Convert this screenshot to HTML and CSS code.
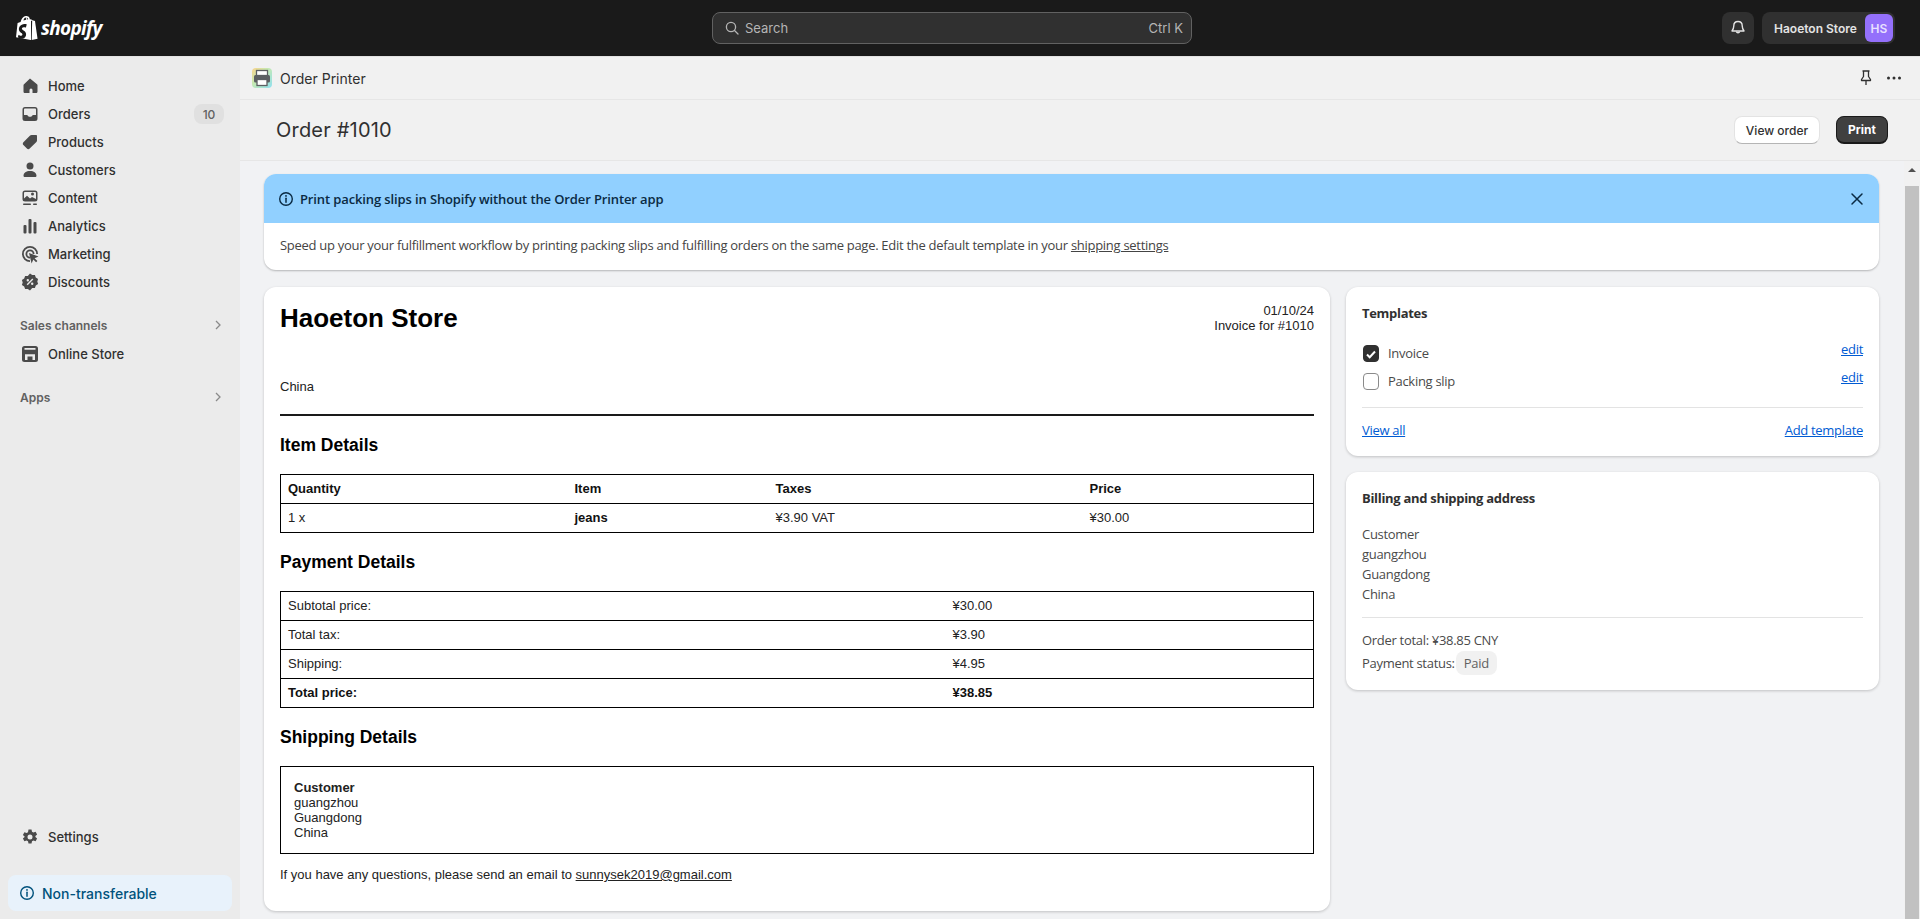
FILE: index.html
```html
<!DOCTYPE html>
<html lang="en">
<head>
<meta charset="utf-8">
<title>Order #1010</title>
<link rel="stylesheet" href="styles.css">
</head>
<body>
<header class="topbar">
  <div class="logo">
    <svg class="logo-bag" viewBox="0 0 22 25" width="22" height="25"><path fill="#fff" d="M18.6 4.9c0-.1-.1-.2-.2-.2l-1.900-.1-1.400-1.400c-.1-.1-.4-.1-.5 0l-.7.200C13.500 1.400 12.700.3 11.300.3h-.1C10.800-.200 10.300 0 9.900 0 6.700 0 5.100 4 4.600 6.100l-2.300.7c-.7.2-.7.2-.8.900L0 21.300 14.700 24l.3-.1V4.800l.6 0 3 .1zM12.200 3.200l-1.300.4V3.300c0-.8-.1-1.400-.3-1.900.8.100 1.300 1 1.600 1.800zM9.700 1.500c.2.500.4 1.200.4 2.100v.2l-2.700.8c.5-2 1.500-2.900 2.300-3.100z"/><path fill="#fff" d="M15.700 24l5.900-1.300S19 5.200 19 5.100c0-.1-.1-.2-.2-.2l-1.700-.1-.9-.9z"/><path fill="#1a1a1a" d="M10.800 8.300l-.9 3.300s-1-.5-2.200-.4c-1.700.1-1.800 1.200-1.800 1.500.1 1.500 4 1.800 4.200 5.300.2 2.700-1.400 4.600-3.800 4.700-2.800.2-4.400-1.500-4.400-1.500l.6-2.500s1.600 1.200 2.800 1.100c.8 0 1.100-.7 1.100-1.200-.1-2-3.300-1.800-3.500-5-.2-2.700 1.600-5.400 5.500-5.700 1.500-.1 2.300.3 2.300.3z"/></svg>
    <span class="logo-word">shopify</span>
  </div>
  <div class="search">
    <svg class="search-icon" viewBox="0 0 14 14" width="14" height="14"><circle cx="6" cy="6" r="4.600" fill="none" stroke="#b5b5b5" stroke-width="1.300"/><path d="M9.500 9.500L13 13" stroke="#b5b5b5" stroke-width="1.300" stroke-linecap="round"/></svg>
    <span class="search-label">Search</span>
    <span class="search-key">Ctrl K</span>
  </div>
  <div class="top-actions">
    <div class="bell">
      <svg viewBox="0 0 16 16" width="16" height="16"><path fill="none" stroke="#e3e3e3" stroke-width="1.400" stroke-linejoin="round" d="M8 1.500c-2.700 0-4.200 2-4.200 4.300 0 2.700-.5 3.500-1.800 5.200h12c-1.300-1.700-1.800-2.500-1.800-5.200C12.200 3.500 10.700 1.500 8 1.500z"/><path fill="none" stroke="#e3e3e3" stroke-width="1.400" d="M6.300 11.500a1.800 1.800 0 0 0 3.400 0"/></svg>
    </div>
    <div class="store-btn">
      <span class="store-name">Haoeton Store</span>
      <span class="avatar">HS</span>
    </div>
  </div>
</header>

<div class="shell">
  <nav class="sidebar">
    <ul class="nav-list">
      <li class="nav-item"><svg class="nav-icon" viewBox="0 0 20 20"><path d="M10 2.500l7 5.700c.4.300.5.600.5 1.100v6.200c0 1-.8 1.500-1.500 1.500h-3.500v-3a1.500 1.500 0 0 0-3 0v3H5c-.8 0-1.500-.5-1.500-1.500V9.300c0-.5.100-.8.500-1.100z"/></svg><span>Home</span></li>
      <li class="nav-item"><svg class="nav-icon" viewBox="0 0 20 20"><path fill-rule="evenodd" d="M5 3h10a2.500 2.500 0 0 1 2.500 2.500v9A2.500 2.500 0 0 1 15 17H5a2.500 2.500 0 0 1-2.500-2.500v-9A2.500 2.500 0 0 1 5 3zm-1 8v-5.500C4 5 4.500 4.500 5 4.500h10c.5 0 1 .5 1 1V11h-2.700c-.6 0-1 .3-1.200.8-.3.600-1 1-2.100 1s-1.800-.4-2.100-1c-.2-.5-.6-.8-1.200-.8z"/></svg><span>Orders</span><span class="count">10</span></li>
      <li class="nav-item"><svg class="nav-icon" viewBox="0 0 20 20"><path d="M11.500 3H16c.6 0 1 .4 1 1v4.500c0 .5-.2 1-.6 1.400l-6.700 6.700c-.8.800-2 .8-2.800 0l-3.500-3.500c-.8-.8-.8-2 0-2.800l6.700-6.700c.4-.4.900-.6 1.400-.6z"/></svg><span>Products</span></li>
      <li class="nav-item"><svg class="nav-icon" viewBox="0 0 20 20"><circle cx="10" cy="6" r="3.500"/><path d="M10 11c3.800 0 6.500 2 6.500 4.700 0 .7-.6 1.300-1.300 1.300H4.800c-.7 0-1.300-.6-1.300-1.300C3.500 13 6.200 11 10 11z"/></svg><span>Customers</span></li>
      <li class="nav-item"><svg class="nav-icon" viewBox="0 0 20 20"><path fill-rule="evenodd" d="M5 2.500h10A2.500 2.500 0 0 1 17.500 5v6a2.500 2.500 0 0 1-2.500 2.500H5A2.500 2.500 0 0 1 2.500 11V5A2.500 2.500 0 0 1 5 2.500zM4 10.500l3-2.800 3 2.800 2-1.500 4 2V5c0-.5-.5-1-1-1H5c-.5 0-1 .5-1 1zM12.500 7.500a1.500 1.500 0 1 0 0-3 1.500 1.500 0 0 0 0 3z"/><rect x="3" y="15.500" width="8" height="1.500" rx=".7"/><rect x="13" y="15.500" width="4" height="1.500" rx=".7"/></svg><span>Content</span></li>
      <li class="nav-item"><svg class="nav-icon" viewBox="0 0 20 20"><rect x="3.500" y="9" width="3" height="8.500" rx="1"/><rect x="8.500" y="3" width="3" height="14.500" rx="1"/><rect x="13.500" y="6" width="3" height="11.500" rx="1"/></svg><span>Analytics</span></li>
      <li class="nav-item"><svg class="nav-icon" viewBox="0 0 20 20"><path fill-rule="evenodd" d="M10 2a8 8 0 0 1 8 8h-1.800A6.200 6.200 0 1 0 10 16.200V18a8 8 0 0 1 0-16zm0 3.500A4.500 4.500 0 0 1 14.500 10h-1.800A2.700 2.700 0 1 0 10 12.700v1.800a4.500 4.500 0 0 1 0-9z"/><path d="M9 9l9.500 3.500-3.900 1.700 2.800 2.800-1.300 1.300-2.800-2.800-1.700 3.900z"/></svg><span>Marketing</span></li>
      <li class="nav-item"><svg class="nav-icon" viewBox="0 0 20 20"><path fill-rule="evenodd" d="M10 1.500l2.200 1.600 2.700-.2.900 2.500 2.300 1.500-.8 2.600.8 2.600-2.300 1.500-.9 2.500-2.700-.2L10 18.500l-2.200-1.600-2.700.2-.9-2.500-2.300-1.500.8-2.600-.8-2.600 2.300-1.500.9-2.500 2.700.2zM7.800 7a1.200 1.200 0 1 0 0 2.400 1.200 1.200 0 0 0 0-2.400zm4.400 3.600a1.200 1.200 0 1 0 0 2.400 1.200 1.200 0 0 0 0-2.400zM12.300 6.600L6.700 12.300l1 1 5.600-5.700z"/></svg><span>Discounts</span></li>
    </ul>
    <div class="nav-section nav-section-sales"><span>Sales channels</span><svg class="chev" viewBox="0 0 8 12" width="8" height="12"><path d="M2 2l4 4-4 4" fill="none" stroke="#8a8a8a" stroke-width="1.300"/></svg></div>
    <ul class="nav-list">
      <li class="nav-item"><svg class="nav-icon" viewBox="0 0 20 20"><path fill-rule="evenodd" d="M4.500 2h11A2.500 2.500 0 0 1 18 4.500v11a2.500 2.500 0 0 1-2.500 2.500h-11A2.500 2.500 0 0 1 2 15.500v-11A2.500 2.500 0 0 1 4.500 2zM4.500 4h11v1.700h-11zM5 10.200h10V16h-2.500v-3.500h-5V16H5z"/></svg><span>Online Store</span></li>
    </ul>
    <div class="nav-section nav-section-apps"><span>Apps</span><svg class="chev" viewBox="0 0 8 12" width="8" height="12"><path d="M2 2l4 4-4 4" fill="none" stroke="#8a8a8a" stroke-width="1.300"/></svg></div>
    <ul class="nav-list nav-bottom">
      <li class="nav-item"><svg class="nav-icon" viewBox="0 0 20 20"><path fill-rule="evenodd" d="M8.500 2.500h3l.5 2.200 1.400.8 2.200-.7 1.500 2.600-1.700 1.500v1.200l1.700 1.500-1.500 2.600-2.200-.7-1.400.8-.5 2.200h-3l-.5-2.200-1.400-.8-2.200.7-1.500-2.600 1.700-1.500V9.400L2.900 7.900l1.500-2.600 2.200.7 1.400-.8zM10 7.500a2.500 2.500 0 1 0 0 5 2.500 2.500 0 0 0 0-5z"/></svg><span>Settings</span></li>
    </ul>
    <div class="plan-box">
      <svg viewBox="0 0 16 16" width="16" height="16"><circle cx="8" cy="8" r="6.300" fill="none" stroke="#00527c" stroke-width="1.400"/><path d="M8 7.200v4" stroke="#00527c" stroke-width="1.500" stroke-linecap="round"/><circle cx="8" cy="4.900" r=".9" fill="#00527c"/></svg>
      <span>Non-transferable</span>
    </div>
  </nav>

  <main class="content">
    <div class="app-header">
      <div class="app-icon">
        <svg viewBox="0 0 20 20" width="20" height="20"><rect x="4.500" y="2.500" width="11" height="5" fill="#fff" stroke="#5c5f62" stroke-width="1.300"/><rect x="2" y="7" width="16" height="7.500" rx="1.500" fill="#5c5f62"/><rect x="5" y="11.500" width="10" height="6" fill="#fff" stroke="#5c5f62" stroke-width="1.300"/></svg>
      </div>
      <span class="app-name">Order Printer</span>
      <div class="app-tools">
        <svg viewBox="0 0 16 18" width="16" height="18"><path fill="none" stroke="#303030" stroke-width="1.300" stroke-linejoin="round" d="M4.500 2h7M5.500 2v5.500L3.500 10.500v1h9v-1L10.500 7.500V2M8 11.500V16"/></svg>
        <svg viewBox="0 0 16 4" width="16" height="4"><circle cx="2.500" cy="2" r="1.500" fill="#303030"/><circle cx="8" cy="2" r="1.500" fill="#303030"/><circle cx="13.500" cy="2" r="1.500" fill="#303030"/></svg>
      </div>
    </div>
    <div class="title-bar">
      <h1 class="page-title">Order #1010</h1>
      <div class="title-actions">
        <button class="btn btn-light">View order</button>
        <button class="btn btn-dark">Print</button>
      </div>
    </div>
    <div class="pane">
      <section class="banner">
        <div class="banner-head">
          <svg viewBox="0 0 16 16" width="16" height="16"><circle cx="8" cy="8" r="6.300" fill="none" stroke="#0a2a43" stroke-width="1.400"/><path d="M8 7.200v4" stroke="#0a2a43" stroke-width="1.500" stroke-linecap="round"/><circle cx="8" cy="4.900" r=".9" fill="#0a2a43"/></svg>
          <strong class="banner-title">Print packing slips in Shopify without the Order Printer app</strong>
          <svg class="banner-close" viewBox="0 0 14 14" width="14" height="14"><path d="M2 2l10 10M12 2L2 12" stroke="#0a2a43" stroke-width="1.500" stroke-linecap="round"/></svg>
        </div>
        <p class="banner-body">Speed up your your fulfillment workflow by printing packing slips and fulfilling orders on the same page. Edit the default template in your <u>shipping settings</u></p>
      </section>

      <div class="columns">
        <article class="card doc">
          <div class="doc-head">
            <h2 class="doc-store">Haoeton Store</h2>
            <div class="doc-meta">01/10/24<br>Invoice for #1010</div>
          </div>
          <p class="doc-country">China</p>
          <hr class="doc-rule">
          <h3 class="doc-h">Item Details</h3>
          <table class="doc-table items">
            <tr><th>Quantity</th><th>Item</th><th>Taxes</th><th>Price</th></tr>
            <tr><td>1 x</td><td><b>jeans</b></td><td>¥3.90 VAT</td><td>¥30.00</td></tr>
          </table>
          <h3 class="doc-h">Payment Details</h3>
          <table class="doc-table pay">
            <tr><td>Subtotal price:</td><td>¥30.00</td></tr>
            <tr><td>Total tax:</td><td>¥3.90</td></tr>
            <tr><td>Shipping:</td><td>¥4.95</td></tr>
            <tr><th>Total price:</th><th>¥38.85</th></tr>
          </table>
          <h3 class="doc-h">Shipping Details</h3>
          <div class="ship-box"><b>Customer</b><br>guangzhou<br>Guangdong<br>China</div>
          <p class="doc-foot">If you have any questions, please send an email to <u>sunnysek2019@gmail.com</u></p>
        </article>

        <aside class="side">
          <section class="card side-card tpl">
            <h4 class="side-title">Templates</h4>
            <div class="tpl-row">
              <span class="check check-on"><svg viewBox="0 0 16 16" width="16" height="16"><path d="M4 8.500l2.700 2.700L12 5.500" fill="none" stroke="#fff" stroke-width="2"/></svg></span>
              <span class="tpl-name">Invoice</span><a class="link tpl-edit">edit</a>
            </div>
            <div class="tpl-row">
              <span class="check"></span>
              <span class="tpl-name">Packing slip</span><a class="link tpl-edit">edit</a>
            </div>
            <hr class="side-rule">
            <div class="tpl-foot"><a class="link">View all</a><a class="link">Add template</a></div>
          </section>
          <section class="card side-card addr">
            <h4 class="side-title">Billing and shipping address</h4>
            <p class="addr-lines">Customer<br>guangzhou<br>Guangdong<br>China</p>
            <hr class="side-rule">
            <p class="total-line">Order total: ¥38.85 CNY</p>
            <p class="status-line">Payment status: <span class="pill">Paid</span></p>
          </section>
        </aside>
      </div>
      <div class="scrollbar" aria-hidden="true"><span class="sb-arrow"></span><span class="sb-thumb"></span></div>
    </div>
  </main>
</div>
</body>
</html>
```
FILE: styles.css
```css
* { box-sizing: border-box; }
html, body { margin: 0; height: 100%; overflow: hidden; }
body { display: flex; flex-direction: column; height: 919px; font-family: Inter, "Liberation Sans", sans-serif; color: #303030; background: #f1f2f4; }
ul { list-style: none; margin: 0; padding: 0; }
h1, h2, h3, h4, p { margin: 0; }

.topbar { height: 56px; flex: none; background: #1a1a1a; display: grid; grid-template-columns: 712px 480px 1fr; align-items: center; }
.logo { display: flex; align-items: center; gap: 3px; padding-left: 16px; }
.logo-bag { display: block; }
.logo-word { font: italic 700 19px "Open Sans", sans-serif; color: #fff; letter-spacing: -0.7px; line-height: 25px; }
.search { height: 32px; background: #303030; border: 1px solid #616161; border-radius: 8px; display: flex; align-items: center; padding: 0 8px 0 12px; font-size: 13px; color: #b5b5b5; }
.search-icon { margin-right: 6px; }
.search-key { margin-left: auto; }
.top-actions { display: flex; justify-content: flex-end; align-items: center; gap: 8px; padding-right: 25px; }
.bell { width: 32px; height: 32px; border-radius: 8px; background: #303030; display: flex; align-items: center; justify-content: center; }
.store-btn { height: 32px; width: 133px; background: #303030; border-radius: 8px; display: flex; align-items: center; justify-content: space-between; padding: 0 2px 0 12px; }
.store-name { font-size: 12px; font-weight: 600; color: #e3e3e3; }
.avatar { width: 28px; height: 28px; border-radius: 6px; background: #9470fb; color: #e8e0ff; font-size: 12px; font-weight: 600; display: flex; align-items: center; justify-content: center; }

.shell { flex: 1; display: flex; min-height: 0; border-top: 1px solid #e3e3e3; }
.sidebar { width: 240px; flex: none; background: #ebebeb; padding: 15px 8px 8px; display: flex; flex-direction: column; }
.nav-item { height: 28px; display: flex; align-items: center; gap: 8px; padding: 0 8px 0 12px; font-size: 13px; font-weight: 500; color: #303030; }
.nav-icon { width: 20px; height: 20px; fill: #4a4a4a; flex: none; }
.count { margin-left: auto; width: 30px; height: 20px; border-radius: 8px; background: #e0e0e0; color: #616161; font-size: 12px; display: flex; align-items: center; justify-content: center; }
.nav-section { height: 28px; display: flex; align-items: center; justify-content: space-between; padding: 0 10px 0 12px; font-size: 12px; font-weight: 600; color: #616161; }
.nav-section-sales { margin: 15px 0 1px; }
.nav-section-apps { margin-top: 15px; }
.nav-bottom { margin-top: auto; }
.plan-box { height: 36px; margin-top: 24px; background: #e8f2fb; border-radius: 8px; display: flex; align-items: center; gap: 7px; padding-left: 11px; font-size: 14px; font-weight: 500; color: #00527c; }

.content { flex: 1; min-width: 0; display: flex; flex-direction: column; }
.app-header { height: 43px; flex: none; background: #f1f1f1; border-bottom: 1px solid #e6e6e6; display: flex; align-items: center; padding: 0 16px 0 12px; }
.app-icon { width: 20px; height: 20px; border-radius: 4px; background: linear-gradient(135deg, #fbd38a 0%, #c7e9b0 40%, #8fe0f0 100%); margin-right: 8px; display: flex; }
.app-name { font-size: 14px; color: #303030; }
.app-tools { margin-left: auto; display: flex; align-items: center; gap: 12px; padding-right: 2px; }
.title-bar { height: 61px; flex: none; background: #f1f1f1; border-bottom: 1px solid #e6e6e6; display: flex; align-items: center; justify-content: space-between; padding: 0 32px 0 36px; }
.page-title { font-size: 20px; font-weight: 400; color: #303030; letter-spacing: .2px; }
.title-actions { display: flex; gap: 16px; }
.btn { height: 28px; border-radius: 8px; font: 500 12px Inter, sans-serif; padding: 0; }
.btn-light { width: 86px; background: #fff; border: 1px solid #e3e3e3; border-bottom-color: #b5b5b5; color: #303030; }
.btn-dark { width: 52px; background: #404040; border: 1px solid #1a1a1a; border-bottom-width: 2px; color: #fff; font-weight: 700; }

.pane { position: relative; flex: 1; min-height: 0; overflow: hidden; padding: 13px 41px 0 24px; background: #f1f2f4; font-family: "Open Sans", sans-serif; }
.banner { background: #fff; border-radius: 12px; overflow: hidden; box-shadow: 0 1px 2px rgba(0,0,0,.25); }
.banner-head { height: 49px; background: #91d0ff; display: flex; align-items: center; gap: 6px; padding: 0 15px 0 14px; color: #0a2a43; }
.banner-title { font-size: 13px; font-weight: 600; color: #0a2a43; letter-spacing: -0.12px; }
.banner-close { margin-left: auto; }
.banner-body { height: 47px; line-height: 45px; padding-left: 16px; font-size: 13px; color: #444; letter-spacing: -0.285px; }

.columns { display: grid; grid-template-columns: 1066px 533px; gap: 16px; margin-top: 17px; align-items: start; }
.card { background: #fff; border-radius: 12px; box-shadow: 0 1px 3px rgba(0,0,0,.2); }

.doc { height: 624px; padding: 14px 16px 0; font-family: "Liberation Sans", Arial, sans-serif; font-size: 13px; color: #222; }
.doc-head { display: flex; justify-content: space-between; align-items: flex-start; height: 57px; }
.doc-store { font-size: 26px; line-height: 34px; font-weight: 700; color: #000; }
.doc-meta { text-align: right; line-height: 15px; margin-top: 2px; }
.doc-country { margin-top: 21px; line-height: 15px; }
.doc-rule { border: 0; border-top: 2px solid #1a1a1a; margin: 20px 0 0; }
.doc-h { font-size: 17.5px; line-height: 22px; font-weight: 700; color: #000; margin-top: 18px; }
.doc-table { border-collapse: collapse; width: 100%; margin-top: 18px; table-layout: fixed; border: 1px solid #000; }
.doc-table th, .doc-table td { border-top: 1px solid #000; border-bottom: 1px solid #000; height: 29px; padding: 0 7px 2px; text-align: left; font-size: 13px; color: #222; }
.doc-table th, .doc-table b { color: #111; }
.items th:nth-child(1) { width: 287px; }
.items th:nth-child(2) { width: 201px; }
.items th:nth-child(3) { width: 314px; }
.pay td:first-child, .pay th:first-child { width: 665px; }
.ship-box { border: 1px solid #000; margin-top: 18px; height: 88px; padding: 13px 13px; line-height: 15px; }
.doc-foot { margin-top: 13px; line-height: 15px; }

.side { display: flex; flex-direction: column; gap: 16px; }
.side-card { padding: 16px; font-size: 13px; color: #303030; letter-spacing: -0.3px; }
.side-title { font-size: 13px; font-weight: 700; line-height: 20px; color: #303030; }
.tpl { height: 169px; }
.tpl-row { display: flex; align-items: center; height: 28px; }
.tpl-row:first-of-type { margin-top: 16px; }
.check { width: 16px; height: 17px; border-radius: 4px; border: 1px solid #8a8a8a; background: #fff; margin: 0 9px 0 1px; display: flex; }
.check-on { background: #303030; border-color: #303030; }
.check-on svg { margin: 0 -1px; }
.tpl-name { color: #4a4a4a; }
.tpl-edit { margin-left: auto; align-self: flex-start; line-height: 22px; margin-top: -1px; }
.link { color: #005bd3; text-decoration: underline; }
.side-rule { border: 0; border-top: 1px solid #e3e3e3; margin: 12px 0 0; }
.tpl-foot { display: flex; justify-content: space-between; margin-top: 12px; line-height: 20px; }
.addr { height: 218px; }
.addr-lines { margin-top: 16px; margin-bottom: 13px; line-height: 20px; color: #4a4a4a; }
.total-line { margin-top: 12px; line-height: 20px; color: #4a4a4a; }
.status-line { line-height: 24px; margin-top: 1px; color: #4a4a4a; }
.pill { display: inline-block; height: 24px; padding: 0 8px; margin-left: -2px; border-radius: 8px; background: #f1f1f1; color: #616161; font-weight: 500; }

.scrollbar { position: absolute; top: 0; right: 0; bottom: 0; width: 16px; background: #f1f1f1; display: flex; flex-direction: column; align-items: center; }
.sb-arrow { width: 0; height: 0; margin-top: 7px; border: 4px solid transparent; border-top-width: 0; border-bottom: 4px solid #505050; }
.sb-thumb { flex: 1; width: 14px; margin-top: 14px; background: #c1c1c1; }
```
